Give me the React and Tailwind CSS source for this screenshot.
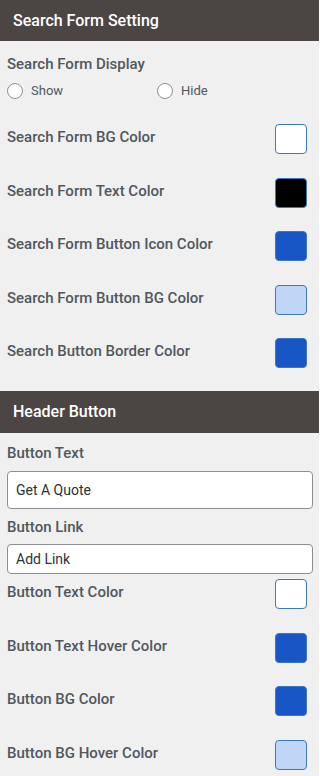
import React from "react";

function ColorRow({ label, color, mt }) {
  return (
    <div className={`flex items-center justify-between h-[30px] ${mt}`}>
      <span className="text-[15px] font-medium text-[#50575e] pb-[4px]">{label}</span>
      <div
        className="w-[32px] h-[30px] rounded-[4px] border border-[#3a78c0]"
        style={{ backgroundColor: color }}
      />
    </div>
  );
}

function Radio({ label }) {
  return (
    <div className="flex items-center gap-[8px]">
      <span className="w-[16px] h-[16px] rounded-full border border-[#8c8f94] bg-white" />
      <span className="text-[13px] text-[#50575e]">{label}</span>
    </div>
  );
}

export default function App() {
  return (
    <div
      className="w-[319px] h-[776px] bg-[#f0f0f0] overflow-hidden"
      style={{ fontFamily: "Roboto, 'Liberation Sans', sans-serif" }}
    >
      <div className="h-[41px] bg-[#4b4643] flex items-center px-[13px]">
        <span className="text-[16px] font-medium text-white">Search Form Setting</span>
      </div>
      <div className="pl-[7px] pr-[12px]">
        <div className="pt-[13px] h-[33px] leading-[20px] text-[15px] font-medium text-[#50575e]">
          Search Form Display
        </div>
        <div className="mt-[7px] h-[20px] flex items-center">
          <div className="w-[150px]">
            <Radio label="Show" />
          </div>
          <Radio label="Hide" />
        </div>
        <ColorRow label="Search Form BG Color" color="#ffffff" mt="mt-[23px]" />
        <ColorRow label="Search Form Text Color" color="#000000" mt="mt-[24px]" />
        <ColorRow label="Search Form Button Icon Color" color="#1756c4" mt="mt-[23px]" />
        <ColorRow label="Search Form Button BG Color" color="#c0d6f6" mt="mt-[24px]" />
        <ColorRow label="Search Button Border Color" color="#1756c4" mt="mt-[23px]" />
      </div>
      <div className="mt-[23px] h-[42px] bg-[#4b4643] flex items-center px-[13px]">
        <span className="text-[16px] font-medium text-white">Header Button</span>
      </div>
      <div className="pl-[7px] pr-[6px]">
        <div className="pt-[10px] leading-[20px] text-[15px] font-medium text-[#50575e]">
          Button Text
        </div>
        <div className="mt-[8px] h-[38px] rounded-[4px] border border-[#8c8f94] bg-white flex items-center px-[8px] text-[14px] text-[#2c3338]">
          Get A Quote
        </div>
        <div className="mt-[8px] leading-[20px] text-[15px] font-medium text-[#50575e]">
          Button Link
        </div>
        <div className="mt-[7px] h-[30px] rounded-[4px] border border-[#8c8f94] bg-white flex items-center px-[8px] text-[14px] text-[#2c3338]">
          Add Link
        </div>
        <div className="pr-[6px]">
          <ColorRow label="Button Text Color" color="#ffffff" mt="mt-[5px]" />
          <ColorRow label="Button Text Hover Color" color="#1756c4" mt="mt-[24px]" />
          <ColorRow label="Button BG Color" color="#1756c4" mt="mt-[23px]" />
          <ColorRow label="Button BG Hover Color" color="#c0d6f6" mt="mt-[24px]" />
        </div>
      </div>
    </div>
  );
}
